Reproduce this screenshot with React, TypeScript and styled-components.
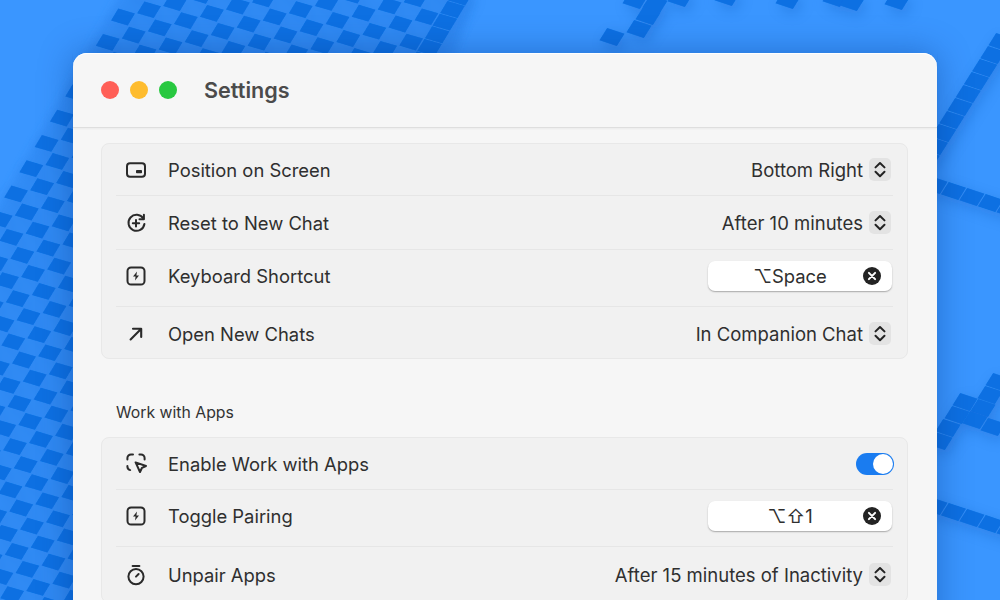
import React from "react";
import styled, { createGlobalStyle } from "styled-components";

const Global = createGlobalStyle`
  html, body { margin: 0; padding: 0; }
  body { font-family: Inter, "Liberation Sans", sans-serif; overflow: hidden; }
`;

const Stage = styled.div`
  position: relative;
  width: 1000px;
  height: 600px;
  overflow: hidden;
  background: #3a96ff;
  padding: 53px 0 0 73px;
  box-sizing: border-box;
`;
const Backdrop = styled.svg`
  position: absolute;
  inset: 0;
`;
const Win = styled.div`
  position: relative;
  width: 864px;
  height: 640px;
  background: #f6f6f6;
  border-radius: 14px 14px 0 0;
  box-shadow: 0 0 34px rgba(0, 45, 120, 0.38), inset 0 1px 0 #fff;
`;
const TitleBar = styled.div`
  height: 74px;
  display: flex;
  align-items: center;
  padding-left: 28px;
  border-bottom: 1px solid #dedede;
  box-shadow: 0 1px 2px rgba(0, 0, 0, 0.05);
`;
const Lights = styled.div`
  display: flex;
  gap: 11px;
  margin-right: 27px;
`;
const Light = styled.span<{ $c: string }>`
  width: 18px;
  height: 18px;
  border-radius: 50%;
  background: ${(p) => p.$c};
`;
const Title = styled.h1`
  margin: 0;
  font-size: 21.6px;
  font-weight: 600;
  color: #4b4b4b;
`;
const Body = styled.div`
  padding: 15px 29px 0 28px;
`;
const Panel = styled.section`
  background: #f1f1f1;
  border: 1px solid #e8e8e8;
  border-radius: 8px;
  padding: 0 14px;
`;
const Section = styled.h2`
  margin: 0;
  height: 78px;
  box-sizing: border-box;
  padding: 45px 0 0 15px;
  font-size: 15.8px;
  line-height: 18px;
  font-weight: 400;
  color: #333;
`;
const Row = styled.div<{ $h: number; $lift?: number; $drop?: number }>`
  height: ${(p) => p.$h}px;
  box-sizing: border-box;
  padding-bottom: ${(p) => p.$lift ?? 0}px;
  padding-top: ${(p) => p.$drop ?? 0}px;
  display: flex;
  align-items: center;
  border-bottom: 1px solid #e6e6e6;
  &:last-child { border-bottom: 0; }
`;
const IconBox = styled.span`
  width: 22px;
  height: 22px;
  margin: 0 21px 0 9px;
  display: flex;
  color: #2a2a2a;
`;
const Label = styled.span`
  flex: 1;
  font-size: 18.4px;
  color: #2f2f2f;
`;
const Value = styled.span`
  font-size: 18.5px;
  color: #2f2f2f;
`;
const Stepper = styled.span`
  width: 22px;
  height: 23px;
  margin: 0 2px 0 6px;
  border-radius: 5px;
  background: #e3e3e3;
  display: flex;
  color: #222;
`;
const ShortcutField = styled.div`
  position: relative;
  width: 184px;
  height: 30px;
  margin-right: 1px;
  box-sizing: border-box;
  padding-right: 20px;
  border-radius: 7px;
  background: #fff;
  box-shadow: 0 1px 1.5px rgba(0, 0, 0, 0.3);
  display: flex;
  align-items: center;
  justify-content: center;
  font-size: 18.4px;
  color: #2f2f2f;
  font-family: Inter, "DejaVu Sans", sans-serif;
`;
const Clear = styled.span`
  position: absolute;
  right: 11px;
  top: 6px;
  width: 18px;
  height: 18px;
  display: flex;
`;
const Toggle = styled.span`
  width: 38px;
  height: 22px;
  box-sizing: border-box;
  margin-right: -1px;
  padding: 1px;
  border-radius: 11px;
  background: #1a7cf0;
  display: flex;
  justify-content: flex-end;
`;
const Knob = styled.span`
  width: 20px;
  height: 20px;
  border-radius: 50%;
  background: #fff;
`;

type V = [number, number];
const U: V = [18.4, 5.4];
const W: V = [-7.64, 12.64];
const U2: V = [18.5, 6];
const W2: V = [-8.2, 13];

function tile(c: V, u: V, w: V, ku = 0.47, kw = 0.47): string {
  const p = (a: number, b: number) =>
    `${(c[0] + a * ku * u[0] + b * kw * w[0]).toFixed(1)},${(c[1] + a * ku * u[1] + b * kw * w[1]).toFixed(1)}`;
  return [p(-1, -1), p(1, -1), p(1, 1), p(-1, 1)].join(" ");
}

const tiles: string[] = [];
for (let i = 0; i <= 15; i++) {
  for (let j = -12; j <= 50; j++) {
    if (i < 15 && (i + j) % 2 !== 0) continue;
    const c: V = [123 + i * U[0] + j * W[0], 17 + i * U[1] + j * W[1]];
    if (c[1] < -12 || c[1] > 612 || c[0] < -14 || c[0] > 520) continue;
    tiles.push(i < 15 ? tile(c, U, W, 0.45, 0.47) : tile(c, U, W));
  }
}
for (let n = 0; n < 10; n++) tiles.push(tile([1001 - n * 8.2, 42 + n * 13], U2, W2));
for (let n = 0; n < 5; n++) tiles.push(tile([935 + n * 18.5, 185 + n * 6], U2, W2));
for (let n = 0; n < 5; n++) tiles.push(tile([935 + n * 18.5, 506 + n * 6], U2, W2));
const loose: V[] = [
  [998, 382], [990, 395], [965, 402], [983, 408], [957, 415], [975, 420], [993, 427], [948, 428], [940, 441],
  [635, 0], [655, 4], [648, 16], [639, 29], [612, 37], [680, -2], [727, -3], [788, 0], [835, -2], [852, 2], [897, 1],
];
loose.forEach((c) => tiles.push(tile(c, U2, W2)));

const Wave = () => (
  <Backdrop width={1000} height={600} viewBox="0 0 1000 600">
    <defs>
      <filter id="soft" x="-20%" y="-20%" width="140%" height="140%">
        <feGaussianBlur stdDeviation="7" />
      </filter>
      <filter id="edge" x="-10%" y="-10%" width="120%" height="120%">
        <feGaussianBlur stdDeviation="4" />
      </filter>
      <filter id="tileblur" x="-5%" y="-5%" width="110%" height="110%">
        <feGaussianBlur stdDeviation="0.4" />
      </filter>
    </defs>
    <g filter="url(#soft)" fill="#0a4fb0" opacity="0.3" transform="translate(3 5)">
      {tiles.map((t, i) => (
        <polygon key={i} points={t} />
      ))}
    </g>
    <polygon points="128,-20 -20,240 -20,620 300,620 476,-20" fill="#2f88f2" opacity="0.65" filter="url(#edge)" />
    <g fill="#096fe2" filter="url(#tileblur)">
      {tiles.map((t, i) => (
        <polygon key={i} points={t} />
      ))}
    </g>
  </Backdrop>
);

const icon = { width: 22, height: 22, viewBox: "0 0 22 22", fill: "none", stroke: "currentColor", strokeWidth: 2, strokeLinecap: "round" as const, strokeLinejoin: "round" as const };

const PipIcon = () => (
  <svg {...icon}>
    <rect x="2" y="4.2" width="18" height="13.6" rx="3" />
    <rect x="11" y="11" width="6" height="3.2" rx="0.8" fill="currentColor" stroke="none" />
  </svg>
);
const ResetIcon = () => (
  <svg {...icon}>
    <path d="M18.3 6.6A8 8 0 1 0 19.4 12" />
    <path d="M18.9 2.8v4.4h-4.4" />
    <path d="M11 8v6.4M7.8 11.2h6.4" />
  </svg>
);
const BoltIcon = () => (
  <svg {...icon}>
    <rect x="2.5" y="2.5" width="17" height="17" rx="3.6" />
    <path d="M12 6.4 8 11.6h2.6L10 15.6l4-5.2h-2.6z" fill="currentColor" stroke="none" />
  </svg>
);
const ArrowIcon = () => (
  <svg {...icon} strokeWidth={2.1}>
    <path d="M5.6 16.4 16 6M8 5.8h8.2V14" />
  </svg>
);
const SelectIcon = () => (
  <svg {...icon}>
    <path d="M2.4 6.6V5A3.6 3.6 0 0 1 6 1.4h2" />
    <path d="M14.4 1.4H16A3.6 3.6 0 0 1 19.6 5v1.6" />
    <path d="M2.4 13v.6a3.6 3.6 0 0 0 2.8 3.5" />
    <path d="M10.6 9.4 21 13l-4 1.8L15 19z" />
  </svg>
);
const TimerIcon = () => (
  <svg {...icon}>
    <path d="M7.6 2h6.8" />
    <circle cx="11" cy="12.6" r="7.6" />
    <path d="m11 12.6 2.6-2.6" />
  </svg>
);
const Chevrons = () => (
  <svg width={22} height={23} viewBox="0 0 22 23" fill="none" stroke="currentColor" strokeWidth={2} strokeLinecap="round" strokeLinejoin="round">
    <path d="m6.5 9.4 4.5-4.4 4.5 4.4M6.5 13.8l4.5 4.4 4.5-4.4" />
  </svg>
);
const ClearIcon = () => (
  <svg width={18} height={18} viewBox="0 0 18 18">
    <circle cx="9" cy="9" r="9" fill="#232323" />
    <path d="m5.9 5.9 6.2 6.2M12.1 5.9l-6.2 6.2" stroke="#fff" strokeWidth={2} strokeLinecap="round" />
  </svg>
);

const Select = ({ value }: { value: string }) => (
  <>
    <Value>{value}</Value>
    <Stepper>
      <Chevrons />
    </Stepper>
  </>
);
const Shortcut = ({ keys }: { keys: string }) => (
  <ShortcutField>
    {keys}
    <Clear>
      <ClearIcon />
    </Clear>
  </ShortcutField>
);

export default function App() {
  return (
    <Stage>
      <Global />
      <Wave />
      <Win>
        <TitleBar>
          <Lights>
            <Light $c="#ff5f57" />
            <Light $c="#febc2e" />
            <Light $c="#28c840" />
          </Lights>
          <Title>Settings</Title>
        </TitleBar>
        <Body>
          <Panel>
            <Row $h={52}>
              <IconBox><PipIcon /></IconBox>
              <Label>Position on Screen</Label>
              <Select value="Bottom Right" />
            </Row>
            <Row $h={54}>
              <IconBox><ResetIcon /></IconBox>
              <Label>Reset to New Chat</Label>
              <Select value="After 10 minutes" />
            </Row>
            <Row $h={57} $lift={4}>
              <IconBox><BoltIcon /></IconBox>
              <Label>Keyboard Shortcut</Label>
              <Shortcut keys="⌥Space" />
            </Row>
            <Row $h={51} $drop={2}>
              <IconBox><ArrowIcon /></IconBox>
              <Label>Open New Chats</Label>
              <Select value="In Companion Chat" />
            </Row>
          </Panel>
          <Section>Work with Apps</Section>
          <Panel>
            <Row $h={52}>
              <IconBox><SelectIcon /></IconBox>
              <Label>Enable Work with Apps</Label>
              <Toggle><Knob /></Toggle>
            </Row>
            <Row $h={57} $lift={4}>
              <IconBox><BoltIcon /></IconBox>
              <Label>Toggle Pairing</Label>
              <Shortcut keys="⌥⇧1" />
            </Row>
            <Row $h={55}>
              <IconBox><TimerIcon /></IconBox>
              <Label>Unpair Apps</Label>
              <Select value="After 15 minutes of Inactivity" />
            </Row>
          </Panel>
        </Body>
      </Win>
    </Stage>
  );
}
